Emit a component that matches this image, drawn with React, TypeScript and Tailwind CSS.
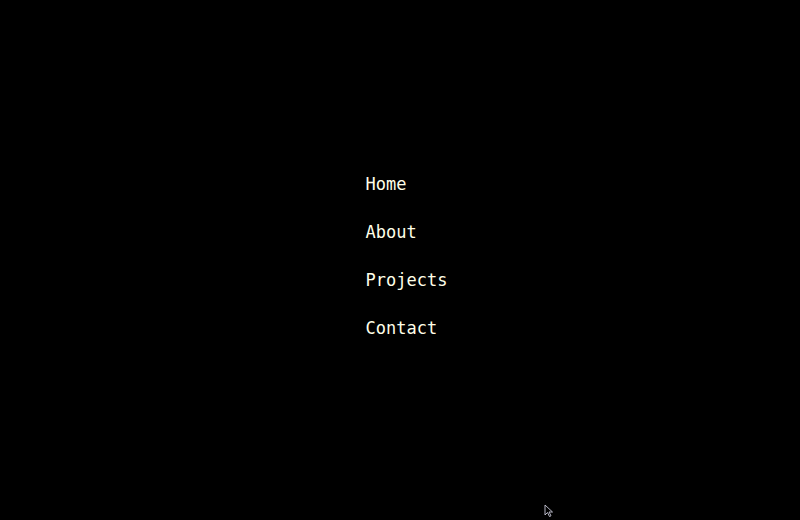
export default function App() {
  const links = ["Home", "About", "Projects", "Contact"];

  return (
    <div className="relative flex h-[520px] w-[800px] items-center justify-center bg-black font-['DejaVu_Sans_Mono',monospace]">
      <nav className="ml-[13px] -mt-[8px]">
        <ul className="flex flex-col">
          {links.map((label) => (
            <li key={label} className="h-12 leading-[48px]">
              <a href="#" className="text-[17px] text-[#ffffe8]">
                {label}
              </a>
            </li>
          ))}
        </ul>
      </nav>

      {/* mouse pointer left in the capture */}
      <svg className="absolute left-[544px] top-[504px]" width="10" height="14" viewBox="0 0 10 14">
        <path d="M1 1 L1 11 L3.5 8.5 L5.5 12.5 L7 11.8 L5 8 L8.5 8 Z" fill="#000" stroke="#c8c8d8" strokeWidth="0.9" />
      </svg>
    </div>
  );
}
